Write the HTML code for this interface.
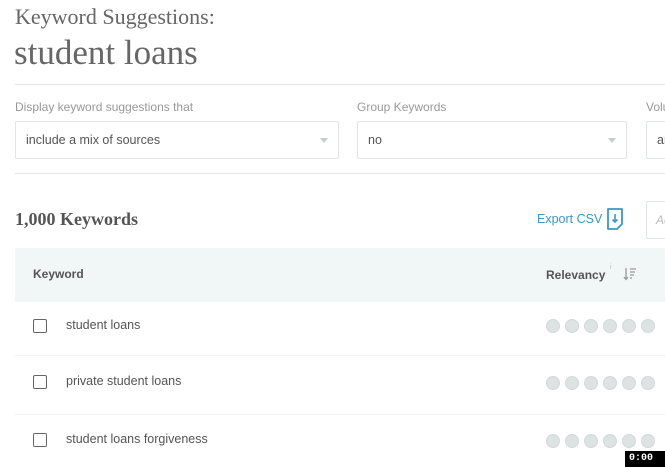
<!DOCTYPE html>
<html><head><meta charset="utf-8"><style>
*{margin:0;padding:0;box-sizing:border-box}
body{width:665px;height:467px;overflow:hidden;background:#fff;font-family:"Liberation Sans",sans-serif;position:relative;color:#555}
.a{position:absolute;white-space:nowrap}
.slab{font-family:"Liberation Serif",serif}
.hr{position:absolute;left:15px;right:0;height:1px;background:#e3e7e7}
.lbl{font-size:12px;color:#999;top:100px}
.sel{position:absolute;top:121px;height:38px;border:1px solid #e0e4e4;border-radius:2px;font-size:12.5px;color:#555;padding:11px 0 0 10px}
.caret{position:absolute;right:10px;top:16px;width:0;height:0;border-left:4px solid transparent;border-right:4px solid transparent;border-top:5px solid #c8cccc}
.cb{position:absolute;left:33px;width:14px;height:14px;border:1.5px solid #666;border-radius:2px}
.kw{position:absolute;left:66px;font-size:12.5px;color:#555}
.dots{position:absolute;left:546px}
.dots i{display:inline-block;width:14px;height:14px;border-radius:50%;background:#dde2e2;border:1px solid #d3d8d8;margin-right:5px}
.sep{position:absolute;left:15px;right:0;height:1px;background:#eef2f2}
</style></head><body>
<div class="a slab" style="left:15px;top:4px;font-size:22px;color:#666">Keyword Suggestions:</div>
<div class="a slab" style="left:14px;top:33px;font-size:35px;color:#666">student loans</div>
<div class="hr" style="top:84px"></div>
<div class="a lbl" style="left:15px">Display keyword suggestions that</div>
<div class="a lbl" style="left:357px">Group Keywords</div>
<div class="a lbl" style="left:646px">Volume</div>
<div class="sel" style="left:15px;width:324px">include a mix of sources<span class="caret"></span></div>
<div class="sel" style="left:357px;width:270px">no<span class="caret"></span></div>
<div class="sel" style="left:646px;width:40px">any</div>
<div class="hr" style="top:173px"></div>
<div class="a slab" style="left:15px;top:209px;font-size:18px;font-weight:bold;color:#555">1,000 Keywords</div>
<div class="a" style="left:537px;top:212px;font-size:12.5px;color:#3b97c4">Export CSV</div>
<svg class="a" style="left:605px;top:207px" width="20" height="24" viewBox="0 0 20 24"><path d="M3 2h14v15l-5 5H3z" fill="none" stroke="#3b97c4" stroke-width="1.8" stroke-linejoin="round"/><path d="M10 7v8M7.5 12.5L10 15l2.5-2.5" fill="none" stroke="#3b97c4" stroke-width="1.6"/></svg>
<div class="a" style="left:646px;top:201px;width:40px;height:38px;border:1px solid #e0e4e4;border-radius:2px;font-size:12px;color:#bbb;padding:11px 0 0 9px;font-style:italic">Add</div>
<div class="a" style="left:15px;top:248px;width:650px;height:54px;background:#f1f6f6"></div>
<div class="a" style="left:33px;top:267px;font-size:12px;font-weight:bold;color:#555">Keyword</div>
<div class="a" style="left:546px;top:268px;font-size:12px;font-weight:bold;color:#555">Relevancy</div>
<div class="a" style="left:610px;top:264px;font-size:7px;color:#bbb">i</div>
<svg class="a" style="left:623px;top:267px" width="14" height="14" viewBox="0 0 14 14"><path d="M3 1v11M1 10l2 2.5L5 10" fill="none" stroke="#999" stroke-width="1.3"/><path d="M7 2h6M7 5h5M7 8h4M7 11h2" stroke="#999" stroke-width="1.3"/></svg>
<div class="cb" style="top:319px"></div><div class="kw" style="top:318px">student loans</div>
<div class="dots" style="top:319px"><i></i><i></i><i></i><i></i><i></i><i></i></div>
<div class="sep" style="top:355px"></div>
<div class="cb" style="top:375px"></div><div class="kw" style="top:374px">private student loans</div>
<div class="dots" style="top:376px"><i></i><i></i><i></i><i></i><i></i><i></i></div>
<div class="sep" style="top:414px"></div>
<div class="cb" style="top:433px"></div><div class="kw" style="top:432px">student loans forgiveness</div>
<div class="dots" style="top:434px"><i></i><i></i><i></i><i></i><i></i><i></i></div>
<div class="a" style="left:625px;top:451px;width:40px;height:16px;background:#000;color:#fff;font-family:'Liberation Mono',monospace;font-size:10px;font-weight:bold;padding:2px 0 0 4px">0:00</div>
</body></html>
